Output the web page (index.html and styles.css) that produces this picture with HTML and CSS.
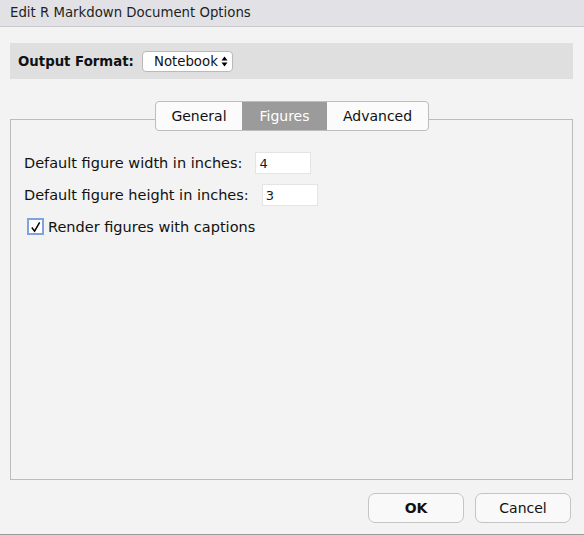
FILE: index.html
```html
<!DOCTYPE html>
<html>
<head>
<meta charset="utf-8">
<link rel="stylesheet" href="styles.css">
</head>
<body>
<div class="window">
  <div class="titlebar">Edit R Markdown Document Options</div>
  <div class="content">
    <div class="format-bar">
      <span class="format-label">Output Format:</span>
      <div class="select">
        <span>Notebook</span>
        <svg class="arrows" width="7" height="11" viewBox="0 0 7 11"><path d="M0.5 4.5 L3.5 0.5 L6.5 4.5 Z M0.5 6.5 L3.5 10.5 L6.5 6.5 Z" fill="#000"/></svg>
      </div>
    </div>
    <div class="tabs-area">
      <div class="tabs">
        <div class="tab">General</div>
        <div class="tab active">Figures</div>
        <div class="tab">Advanced</div>
      </div>
      <div class="panel">
        <div class="row">
          <span class="label">Default figure width in inches:</span>
          <div class="input">4</div>
        </div>
        <div class="row">
          <span class="label">Default figure height in inches:</span>
          <div class="input">3</div>
        </div>
        <div class="check-row">
          <div class="checkbox">
            <svg width="14" height="14" viewBox="0 0 14 14"><path d="M3 7.5 L6 11.5 L11.5 2" stroke="#000" stroke-width="1.6" fill="none"/></svg>
          </div>
          <span class="label">Render figures with captions</span>
        </div>
      </div>
    </div>
    <div class="buttons">
      <div class="btn ok">OK</div>
      <div class="btn">Cancel</div>
    </div>
  </div>
</div>
</body>
</html>
```

FILE: styles.css
```css
html, body {
  margin: 0;
  padding: 0;
}
body {
  width: 584px;
  height: 535px;
  background: #f2f3f2;
  font-family: "DejaVu Sans", sans-serif;
  color: #1a1a1a;
  overflow: hidden;
}
.window {
  width: 584px;
  height: 535px;
  display: flex;
  flex-direction: column;
  box-sizing: border-box;
  border-bottom: 1px solid #9b9b9b;
}
.titlebar {
  height: 27px;
  box-sizing: border-box;
  background: #e2e2e6;
  border-bottom: 1px solid #c9c9cc;
  padding-left: 10px;
  font-size: 13.3px;
  line-height: 25px;
  color: #1f1f1f;
}
.content {
  flex: 1;
  display: flex;
  flex-direction: column;
  padding: 16px 11px 0 10px;
}
.format-bar {
  height: 36px;
  background: #dfdfdf;
  display: flex;
  align-items: center;
  padding-left: 8px;
}
.format-label {
  font-weight: bold;
  font-size: 13.3px;
  color: #111;
  margin-right: 8px;
}
.select {
  width: 91px;
  height: 21px;
  box-sizing: border-box;
  background: #fff;
  border: 1px solid #b9b9b9;
  border-radius: 4px;
  display: flex;
  align-items: center;
  justify-content: flex-end;
  padding-right: 4px;
  font-size: 13.3px;
  color: #111;
}
.select span {
  margin-right: 3px;
}
.tabs-area {
  margin-top: 22px;
  display: flex;
  flex-direction: column;
}
.tabs {
  align-self: center;
  display: flex;
  height: 30px;
  box-sizing: border-box;
  border: 1px solid #bdbdbd;
  border-radius: 4px;
  background: #fbfbfb;
  overflow: hidden;
  margin-left: 1px;
  position: relative;
  z-index: 1;
}
.tab {
  display: flex;
  align-items: center;
  justify-content: center;
  font-size: 14px;
  color: #111;
}
.tab:first-child { width: 86px; }
.tab.active { width: 85px; background: #9b9b9b; color: #fff; }
.tab:last-child { width: 101px; }
.panel {
  margin-top: -12px;
  height: 361px;
  box-sizing: border-box;
  border: 1px solid #bcbcbc;
  padding: 32px 0 0 13px;
  display: flex;
  flex-direction: column;
}
.row {
  display: flex;
  align-items: center;
  height: 22px;
  margin-bottom: 10px;
}
.label {
  font-size: 14.5px;
  color: #111;
}
.input {
  flex-shrink: 0;
  width: 56px;
  height: 22px;
  box-sizing: border-box;
  background: #fff;
  border: 1px solid #e4e4e4;
  margin-left: 13px;
  font-size: 13px;
  padding-left: 3px;
  line-height: 21px;
}
.check-row {
  display: flex;
  align-items: center;
  margin-top: 2px;
  margin-left: 3px;
}
.checkbox {
  width: 17px;
  height: 17px;
  box-sizing: border-box;
  border: 2px solid #7fa2e0;
  background: #fff;
  display: flex;
  align-items: center;
  justify-content: center;
  margin-right: 4px;
}
.buttons {
  display: flex;
  justify-content: flex-end;
  gap: 11px;
  margin-top: 13px;
  margin-right: 2px;
}
.btn {
  width: 96px;
  height: 30px;
  box-sizing: border-box;
  border: 1px solid #c4c4c4;
  border-radius: 7px;
  background: #f9f9f9;
  display: flex;
  align-items: center;
  justify-content: center;
  font-size: 14px;
  color: #111;
}
.btn.ok { font-weight: bold; }
```
